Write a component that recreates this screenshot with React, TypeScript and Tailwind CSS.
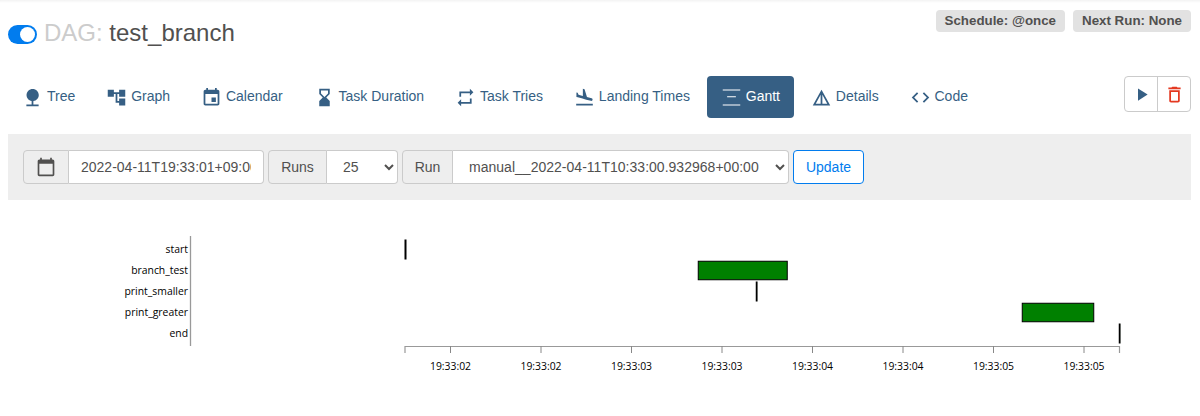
const NAV = "#365f84";

function Icon({ d, size = 21, color = NAV, className = "" }: { d: string; size?: number; color?: string; className?: string }) {
  return (
    <svg width={size} height={size} viewBox="0 0 24 24" fill={color} className={"shrink-0 " + className}>
      <path d={d} />
    </svg>
  );
}

const items = [
  { label: "Tree", d: "M13 16.12c3.47-.41 6.17-3.36 6.17-6.95 0-3.87-3.13-7-7-7s-7 3.13-7 7c0 3.47 2.52 6.34 5.83 6.89V20H5v2h14v-2h-6v-3.88z" },
  { label: "Graph", d: "M22 11V3h-7v3H9V3H2v8h7V8h2v10h4v3h7v-8h-7v3h-2V8h2v3z" },
  { label: "Calendar", d: "M17 12h-5v5h5v-5zM16 1v2H8V1H6v2H5c-1.11 0-1.99.9-1.99 2L3 19c0 1.1.89 2 2 2h14c1.1 0 2-.9 2-2V5c0-1.1-.9-2-2-2h-1V1h-2zm3 18H5V8h14v11z" },
  { label: "Task Duration", d: "M18 22l-.01-6L14 12l3.99-4.01L18 2H6v6l4 4-4 3.99V22h12zM8 7.5V4h8v3.5l-4 4-4-4z" },
  { label: "Task Tries", d: "M7 7h10v3l4-4-4-4v3H5v6h2V7zm10 10H7v-3l-4 4 4 4v-3h12v-6h-2v4z" },
  { label: "Landing Times", d: "M2.5 19h19v2h-19zm7.18-5.73l4.35 1.16 5.31 1.42c.8.21 1.62-.26 1.84-1.06.21-.8-.26-1.62-1.06-1.84l-5.31-1.42-2.76-9.02L10.12 2v8.28L5.15 8.95l-.93-2.32-1.45-.39v5.17l1.6.43 5.31 1.43z" },
  { label: "Gantt", d: "M2 2.9h20v1.1H2zM2 19.9h20v1.1H2zM7 10.5h10v1.3H7z", active: true },
  { label: "Details", d: "M12 3L2 21h20L12 3zm1 5.92L18.6 19H13V8.92zm-2 0V19H5.4L11 8.92z" },
  { label: "Code", d: "M9.4 16.6L4.8 12l4.6-4.6L8 6l-6 6 6 6 1.4-1.4zm5.2 0l4.6-4.6-4.6-4.6L16 6l6 6-6 6-1.4-1.4z" },
];

const addon = "flex items-center justify-center h-[34px] bg-[#eeeeee] border border-[#cbcbcb] rounded-l-[4px] text-[14px] text-[#51504f]";
const selectCls = "h-[34px] bg-white border border-l-0 border-[#cbcbcb] rounded-r-[4px] text-[14px] text-[#51504f] pl-[12px] tracking-[0.02px] outline-none";

const rows = [
  { name: "start", y: 253 },
  { name: "branch_test", y: 274 },
  { name: "print_smaller", y: 295 },
  { name: "print_greater", y: 316 },
  { name: "end", y: 337 },
];
const ticks = [
  { x: 450.5, t: "19:33:02" },
  { x: 541, t: "19:33:02" },
  { x: 631.5, t: "19:33:03" },
  { x: 722, t: "19:33:03" },
  { x: 812.5, t: "19:33:04" },
  { x: 903, t: "19:33:04" },
  { x: 993.5, t: "19:33:05" },
  { x: 1084, t: "19:33:05" },
];
const bars = [
  { x: 405, y: 240, w: 1, h: 19 },
  { x: 698.25, y: 261.25, w: 89, h: 18.5 },
  { x: 756.25, y: 282, w: 0.8, h: 19 },
  { x: 1022.25, y: 303.25, w: 71.5, h: 18.5 },
  { x: 1119.25, y: 324, w: 0.8, h: 19 },
];

function Chart() {
  return (
    <svg width={1200} height={190} viewBox="0 216 1200 190" className="block -mx-2 mt-4" style={{ fontFamily: '"Open Sans", sans-serif' }}>
      {rows.map((r) => (
        <text key={r.name} x={188} y={r.y} textAnchor="end" fontSize={10.4} fill="#000">{r.name}</text>
      ))}
      <path d="M190.5 236V346" stroke="#999" strokeWidth={1.3} fill="none" />
      {bars.map((b, i) => (
        <rect key={i} x={b.x} y={b.y} width={b.w} height={b.h} fill="#008000" stroke="#000" strokeWidth={1} />
      ))}
      <path d="M405 353V346.5H1119.5V353" stroke="#999" strokeWidth={1.2} fill="none" />
      {ticks.map((t, i) => (
        <g key={i}>
          <path d={`M${t.x} 346V353`} stroke="#888" strokeWidth={1} />
          <text x={t.x} y={370} textAnchor="middle" fontSize={10.4} fill="#000">{t.t}</text>
        </g>
      ))}
    </svg>
  );
}

export default function App() {
  return (
    <div className="w-[1200px] h-[416px] overflow-hidden bg-white px-2 text-[14px] text-[#51504f]" style={{ fontFamily: '"Liberation Sans", Arial, sans-serif' }}>
      <div className="h-[3px] -mx-2 bg-gradient-to-b from-[#f3f3f3] to-white" />
      <div className="flex justify-between items-start h-[73px]">
        <div className="flex items-center mt-[14px] h-[32px]">
          <div className="w-[29px] h-[19px] rounded-full bg-[#017cee] relative mr-[7px] mt-[2px]">
            <div className="absolute right-[2px] top-[2px] w-[15px] h-[15px] rounded-full bg-white" />
          </div>
          <h3 className="text-[24px] leading-[32px] text-[#51504f]">
            <span className="text-[#cccccc]">DAG:</span> test_branch
          </h3>
        </div>
        <div className="flex gap-[8px] mt-[7px] mr-[1px]">
          <span className="h-[22px] px-[9px] flex items-center rounded-[4px] bg-[#e2e2e2] text-[13.33px] font-bold">Schedule: @once</span>
          <span className="h-[22px] px-[9px] flex items-center rounded-[4px] bg-[#e2e2e2] text-[13.33px] font-bold">Next Run: None</span>
        </div>
      </div>

      <div className="flex justify-between items-start h-[58px]">
        <nav className="flex gap-[2.85px]">
          {items.map((it) => (
            <a key={it.label} className={"flex items-center h-[42px] px-[14px] gap-[4px] rounded-[4px] " + (it.active ? "bg-[#365f84] text-white" : "text-[#365f84]")}>
              <Icon d={it.d} color={it.active ? "#fff" : NAV} />
              <span className="pb-[2px]">{it.label}</span>
            </a>
          ))}
        </nav>
        <div className="flex h-[36px] mr-[1px] border border-[#cbcbcb] rounded-[4px]">
          <button className="w-[33px] flex items-center justify-center border-r border-[#cbcbcb]">
            <Icon d="M8 5v14l11-7z" />
          </button>
          <button className="w-[32px] flex items-center justify-center">
            <Icon d="M6 19c0 1.1.9 2 2 2h8c1.1 0 2-.9 2-2V7H6v12zM8 9h8v10H8V9zm7.5-5l-1-1h-5l-1 1H5v2h14V4z" color="#e43921" />
          </button>
        </div>
      </div>

      <div className="h-[66px] mr-[1px] bg-[#eeeeee] px-[15px] flex items-center gap-[4px]">
        <div className="flex">
          <div className={addon + " w-[46px]"}>
            <Icon d="M20 3h-1V1h-2v2H7V1H5v2H4c-1.1 0-2 .9-2 2v16c0 1.1.9 2 2 2h16c1.1 0 2-.9 2-2V5c0-1.1-.9-2-2-2zm0 18H4V8h16v13z" size={20} color="#51504f" />
          </div>
          <input readOnly value="2022-04-11T19:33:01+09:00" className="w-[195px] h-[34px] bg-white border border-l-0 border-[#cbcbcb] rounded-r-[4px] px-[12px] text-[14px] text-[#51504f] outline-none" />
        </div>
        <div className="flex">
          <div className={addon + " w-[59px]"}>Runs</div>
          <select defaultValue="25" className={selectCls + " w-[71px]"}>
            <option>25</option>
          </select>
        </div>
        <div className="flex">
          <div className={addon + " w-[51px]"}>Run</div>
          <select className={selectCls + " w-[336px]"}>
            <option>manual__2022-04-11T10:33:00.932968+00:00</option>
          </select>
        </div>
        <button className="w-[71px] h-[34px] border border-[#017cee] rounded-[4px] text-[#017cee] text-[14px] bg-white">Update</button>
      </div>

      <Chart />
    </div>
  );
}
